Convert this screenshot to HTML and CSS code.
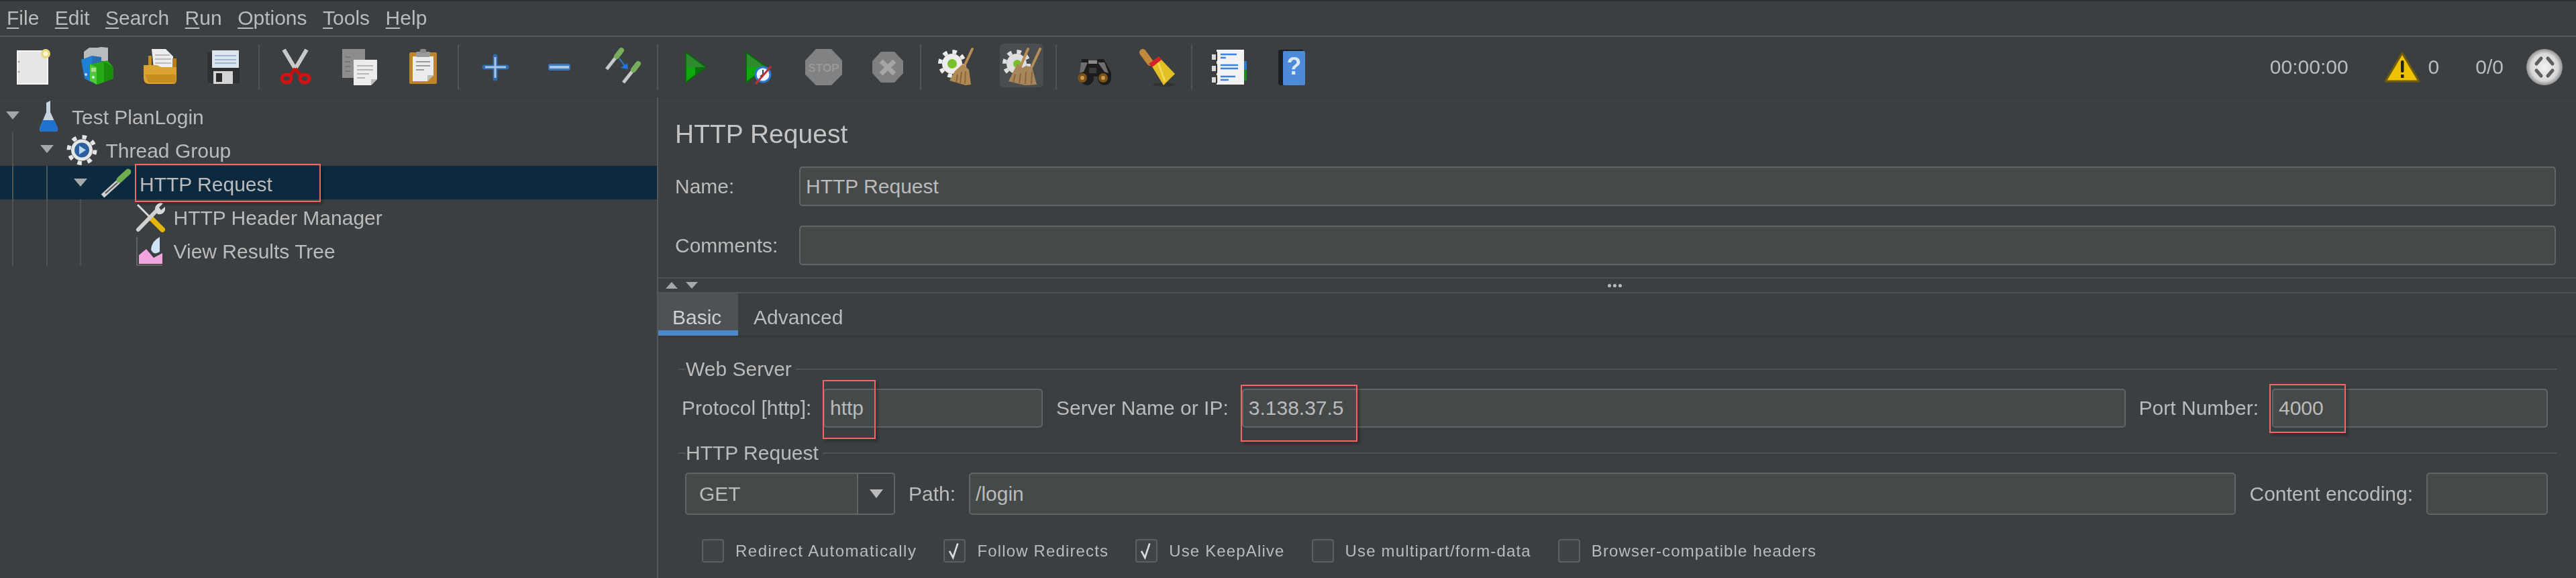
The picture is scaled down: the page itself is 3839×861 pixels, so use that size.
FILE: index.html
```html
<!DOCTYPE html>
<html lang="en">
<head>
<meta charset="utf-8">
<title>Apache JMeter</title>
<link rel="stylesheet" href="styles.css">
</head>
<body>
<div class="app">
  <nav class="menubar">
    <span><u>F</u>ile</span><span><u>E</u>dit</span><span><u>S</u>earch</span><span><u>R</u>un</span><span><u>O</u>ptions</span><span><u>T</u>ools</span><span><u>H</u>elp</span>
  </nav>
  <div class="toolbar">
    <div class="tb"><svg class="ic" viewBox="0 0 70 70"><rect x="13" y="11" width="45" height="49" fill="#e6e6e6" stroke="#f6f6f6" stroke-width="2"/><circle cx="15" cy="27" r="1.6" fill="#aaa"/><circle cx="15" cy="42" r="1.6" fill="#aaa"/><circle cx="55" cy="15" r="7" fill="#e8d680"/><circle cx="55" cy="15" r="3.5" fill="#fff8d8"/></svg></div>
    <div class="tb"><svg class="ic" viewBox="0 0 70 70"><path d="M17 12l8-6h12l6-1 10 1v20H17z" fill="#b9bcbe"/><path d="M13 24l16-6v40l-11-6z" fill="#1e7fd6"/><path d="M29 18l14 2v34l-14 4z" fill="#2a6bb0"/><path d="M26 31l26-6 9 10v17l-24 9-11-6z" fill="#27a915"/><path d="M26 31l10 4v26l-10-6z" fill="#52c83c"/><path d="M47 27l14 8v17l-14 5z" fill="#1b8d0c"/><circle cx="31" cy="50" r="2" fill="#dfe"/><rect x="28" y="36" width="7" height="6" fill="#a8e090"/><circle cx="20" cy="46" r="2" fill="#cde"/></svg></div>
    <div class="tb"><svg class="ic" viewBox="0 0 70 70"><path d="M18 18h5v15H18z" fill="#c08a1e"/><path d="M23 8h21l11 11v18H26z" fill="#ededed"/><path d="M28 17h22M28 23h24M28 29h24" stroke="#bbb" stroke-width="2"/><path d="M54 22h6v16h-6z" fill="#b67f18"/><path d="M11 32h20l6 3h23v20q0 5-5 5H19q-7 0-8-8z" fill="#dba22f"/><path d="M13 46h46v12H18z" fill="#c78d1f"/></svg></div>
    <div class="tb"><svg class="ic" viewBox="0 0 70 70"><path d="M11 13h48v46H14l-3-3z" fill="#2f3133"/><rect x="18" y="10" width="40" height="26" fill="#dde6ee"/><path d="M22 18h32M22 24h32M22 29h32" stroke="#9fb6cc" stroke-width="2"/><rect x="20" y="41" width="29" height="19" fill="#d4d4d4"/><rect x="24" y="44" width="9" height="13" fill="#2b2b2b"/></svg></div>
    <i class="sep"></i>
    <div class="tb"><svg class="ic" viewBox="0 0 70 70"><path d="M18 9l18 30M52 9L34 39" stroke="#c9c9c9" stroke-width="6" fill="none"/><path d="M35 37L28 46M35 37l7 9" stroke="#c01010" stroke-width="5"/><ellipse cx="22" cy="52" rx="7" ry="6" fill="none" stroke="#d01414" stroke-width="5"/><ellipse cx="49" cy="52" rx="7" ry="6" fill="none" stroke="#d01414" stroke-width="5"/></svg></div>
    <div class="tb"><svg class="ic" viewBox="0 0 70 70"><rect x="10" y="8" width="34" height="43" fill="#8d8d8d"/><path d="M14 20h8M14 27h8M14 34h8M14 41h8" stroke="#777" stroke-width="2"/><path d="M27 24h35v29l-9 9H27z" fill="#ececec"/><path d="M53 62l9-9h-9z" fill="#bcbcbc"/><path d="M32 33h24M32 39h24M32 45h18M32 51h12" stroke="#b5b5b5" stroke-width="2"/></svg></div>
    <div class="tb"><svg class="ic" viewBox="0 0 70 70"><rect x="15" y="13" width="41" height="47" rx="2" fill="#bf8426"/><path d="M20 19h31v28l-9 9H20z" fill="#ececec"/><path d="M42 56l9-9h-9z" fill="#bbb"/><path d="M25 27h21M25 33h21M25 39h12" stroke="#9b9b9b" stroke-width="2"/><rect x="25" y="12" width="21" height="8" rx="2" fill="#9a9a9a"/><rect x="31" y="8" width="9" height="6" rx="2" fill="#8a8a8a"/></svg></div>
    <i class="sep"></i>
    <div class="tb"><svg class="ic" viewBox="0 0 70 70"><path d="M20 35h33M36 19v33" stroke="#2e6cb0" stroke-width="7" stroke-linecap="round"/><path d="M21 35h31M36 20v31" stroke="#a9c6e6" stroke-width="3"/></svg></div>
    <div class="tb"><svg class="ic" viewBox="0 0 70 70"><rect x="20" y="30" width="33" height="10" rx="3" fill="#3a77bb"/><rect x="22" y="33" width="29" height="4" fill="#a9c6e6"/></svg></div>
    <div class="tb"><svg class="ic" viewBox="0 0 70 70"><path d="M12 38l15-19" stroke="#c9c9c9" stroke-width="5"/><path d="M27 19l7-9" stroke="#77ad5c" stroke-width="8" stroke-linecap="round"/><path d="M37 58l15-19" stroke="#c9c9c9" stroke-width="5"/><path d="M52 39l7-9" stroke="#77ad5c" stroke-width="8" stroke-linecap="round"/><path d="M31 22l8 11" stroke="#2a78d8" stroke-width="2"/><path d="M44 38l-11-2 10-7z" fill="#1c77e6"/></svg></div>
    <i class="sep"></i>
    <div class="tb shift"><svg class="ic" viewBox="0 0 70 70"><path d="M20 13l30 22-30 23z" fill="#0fa80f" stroke="#0a6a0a" stroke-width="2" stroke-linejoin="round"/><path d="M21 15l27 20H21z" fill="#2e8b2e"/><path d="M34 35l15 0-15 12z" fill="#0d6f0d"/></svg></div>
    <div class="tb shift"><svg class="ic" viewBox="0 0 70 70"><path d="M15 13l30 22-30 23z" fill="#0fa80f" stroke="#0a6a0a" stroke-width="2" stroke-linejoin="round"/><path d="M16 15l27 20H16z" fill="#2e8b2e"/><circle cx="40" cy="46" r="11" fill="#eef4fb" stroke="#2a78d0" stroke-width="3"/><path d="M40 39v7l-4 3" stroke="#345" stroke-width="2" fill="none"/><path d="M29 60l23-26" stroke="#c0302e" stroke-width="3"/></svg></div>
    <div class="tb shift"><svg class="ic" viewBox="0 0 70 70"><path d="M24 8h23l16 17v21L47 62H24L8 46V25z" fill="#828282"/><text class="stop-txt" x="35.5" y="42" text-anchor="middle">STOP</text></svg></div>
    <div class="tb shift"><svg class="ic" viewBox="0 0 70 70"><path d="M26 12h20l13 14v18L46 58H26L13 44V26z" fill="#808080"/><path d="M26 26l20 19M46 26L26 45" stroke="#a6a6a6" stroke-width="7"/></svg></div>
    <i class="sep"></i>
    <div class="tb"><svg class="ic" viewBox="0 0 70 70"><circle cx="28" cy="30" r="15" fill="#ececec"/><circle cx="28" cy="30" r="18" fill="none" stroke="#ececec" stroke-width="6" stroke-dasharray="6.5 7.6"/><circle cx="28" cy="30" r="7" fill="#7ac02a"/><path d="M58 8L44 38" stroke="#b58d55" stroke-width="4" stroke-linecap="round"/><path d="M44 30l9 9 3 22-8 1-24-7 8-14z" fill="#b08a55"/><path d="M36 46l-2 12M42 42l-2 17M48 41l-1 19" stroke="#8a6636" stroke-width="2"/></svg></div>
    <div class="tb hover"><svg class="ic" viewBox="0 0 70 70"><circle cx="27" cy="30" r="15" fill="#dedede"/><circle cx="27" cy="30" r="18" fill="none" stroke="#dedede" stroke-width="6" stroke-dasharray="6.5 7.6"/><circle cx="28" cy="30" r="6" fill="#7ac02a"/><path d="M44 8L32 36M62 8L49 36" stroke="#b58d55" stroke-width="4" stroke-linecap="round"/><path d="M28 30l8 6 5-3 9 2 7 26-18 1-24-6z" fill="#a9855a"/><path d="M25 46l-3 12M33 44l-2 15M41 42l-1 18M50 42l-1 18" stroke="#86653c" stroke-width="2"/></svg></div>
    <i class="sep"></i>
    <div class="tb"><svg class="ic" viewBox="0 0 70 70"><path d="M19 23h9l3 4h9l3-4h9l11 20v9a10 10 0 0 1-20 0v-3h-6v3a10 10 0 0 1-20 0v-9z" fill="#1c1c1c"/><path d="M18 28h10l-6 14-6 2zM43 28h10l6 16-6-2z" fill="#6e6e6e"/><rect x="29" y="25" width="13" height="5" fill="#8a8a8a"/><rect x="30" y="36" width="11" height="8" fill="#3a3a3a"/><circle cx="20" cy="51" r="7" fill="#7c5218"/><circle cx="51" cy="51" r="7" fill="#7c5218"/><circle cx="20" cy="51" r="3" fill="#c89a50"/><circle cx="51" cy="51" r="3" fill="#c89a50"/></svg></div>
    <div class="tb"><svg class="ic" viewBox="0 0 70 70"><ellipse cx="47" cy="61" rx="17" ry="3" fill="#333"/><path d="M15 13l11 15" stroke="#c08a3a" stroke-width="10" stroke-linecap="round"/><path d="M27 31l13-10 23 24-17 17z" fill="#e3c025"/><path d="M38 28l10 28" stroke="#f2da55" stroke-width="3"/><path d="M24 30l15-11 4 5-14 11z" fill="#d4202a"/></svg></div>
    <i class="sep"></i>
    <div class="tb"><svg class="ic" viewBox="0 0 70 70"><rect x="18" y="9" width="41" height="52" fill="#f2f2f2"/><rect x="59" y="26" width="4" height="13" fill="#2d78d0"/><rect x="59" y="39" width="4" height="16" fill="#1c8a1c"/><path d="M11 16h9v8h-9zM11 33h9v8h-9zM11 50h9v8h-9z" fill="#d8d8d8"/><path d="M18 12v14M18 30v14M18 47v12" stroke="#333" stroke-width="2"/><path d="M24 16h24M24 21h8M24 32h26M24 37h26M24 49h22M24 54h12" stroke="#3b83dd" stroke-width="2.5"/></svg></div>
    <div class="tb"><svg class="ic" viewBox="0 0 70 70"><path d="M15 12q0-3 3-3h34v4H22v49h-3q-4 0-4-4z" fill="#1d1f21"/><rect x="22" y="11" width="33" height="51" rx="2" fill="#4d8ad8"/><text class="help-q" x="38.5" y="46" text-anchor="middle">?</text></svg></div>
    <div class="status">
      <span>00:00:00</span>
      <svg class="warn" viewBox="0 0 54 48"><path d="M27 3L52 45H2z" fill="#f0c300" stroke="#6f5c08" stroke-width="3" stroke-linejoin="round"/><rect x="25" y="14" width="4.5" height="18" rx="2" fill="#222"/><rect x="25" y="35" width="4.5" height="5" fill="#222"/></svg>
      <span class="warn-n">0</span>
      <span class="ratio">0/0</span>
      <svg class="globe" viewBox="0 0 54 54"><defs><radialGradient id="gl"><stop offset="0" stop-color="#f2f2f2"/><stop offset=".75" stop-color="#d8d8d8"/><stop offset="1" stop-color="#8f8f8f"/></radialGradient></defs><ellipse cx="27" cy="27" rx="27" ry="27" fill="url(#gl)"/><path d="M15 22l7-8M32 14l7 8M15 32l7 8M39 32l-7 8" stroke="#5f5f5f" stroke-width="5" stroke-linecap="round"/></svg>
    </div>
  </div>
  <div class="main">
    <aside class="tree">
      <div class="row"><i class="tri"></i>
        <svg class="ti" viewBox="0 0 46 50"><path d="M21 6l6-3v17l11 24q1 5-4 5H15q-5 0-4-5l10-24z" fill="#c8d4df"/><path d="M16 32h17l5 12q1 5-4 5H15q-5 0-4-5z" fill="#1f72cf"/></svg>
        <span class="lb">Test PlanLogin</span></div>
      <div class="row"><i class="ind"></i><i class="tri"></i>
        <svg class="ti" viewBox="0 0 46 50"><circle cx="23" cy="26.500" r="16" fill="#e6e6e6"/><circle cx="23" cy="26.500" r="19.500" fill="none" stroke="#e6e6e6" stroke-width="6" stroke-dasharray="6.500 8.800"/><circle cx="23" cy="26.500" r="11" fill="#2c5f9e"/><path d="M19 20l10 6.500-10 6.500z" fill="#bcd6f0"/></svg>
        <span class="lb">Thread Group</span></div>
      <div class="row sel"><i class="ind"></i><i class="ind"></i><i class="tri"></i>
        <svg class="ti" viewBox="0 0 46 50"><path d="M4 45L28 23" stroke="#cfcfcf" stroke-width="7"/><path d="M8 41L26 25" stroke="#555" stroke-width="2"/><path d="M29 21l13-12" stroke="#6fae4f" stroke-width="9" stroke-linecap="round"/></svg>
        <span class="lb">HTTP Request</span><b class="mark mark-tree"></b></div>
      <div class="row"><i class="ind"></i><i class="ind"></i><i class="ind"></i><i class="tri none"></i>
        <svg class="ti" viewBox="0 0 46 50"><path d="M5 8l20 20" stroke="#d8d8d8" stroke-width="3"/><path d="M27 30l15 15" stroke="#e5b50f" stroke-width="8" stroke-linecap="round"/><path d="M6 45L35 15" stroke="#d0d0d0" stroke-width="6" stroke-linecap="round"/><path d="M31 15a9 9 0 0 1 12-9l-6 6 3 4 6-5a9 9 0 0 1-11 11z" fill="#d8d8d8"/></svg>
        <span class="lb">HTTP Header Manager</span></div>
      <div class="row"><i class="ind"></i><i class="ind"></i><i class="ind"></i><i class="tri none"></i>
        <svg class="ti" viewBox="0 0 46 50"><path d="M4 6v42h38" stroke="#6e6e6e" stroke-width="1.500" fill="none"/><path d="M7 46V33l11-9 11 13 13-7v16z" fill="#f2a4de"/><path d="M38 6Q26 12 25 25q4 9 13 3z" fill="#cfe3f7"/></svg>
        <span class="lb">View Results Tree</span></div>
    </aside>
    <section class="detail">
      <div class="head">
        <h1 class="title">HTTP Request</h1>
        <div class="namegrid">
          <label>Name:</label><div class="field">HTTP Request</div>
          <label>Comments:</label><div class="field"></div>
        </div>
      </div>
      <div class="splitter">
        <div class="arrows"><i class="up"></i><i class="down"></i></div>
        <div class="dots"><i></i><i></i><i></i></div>
        <div></div>
      </div>
      <div class="tabs"><div class="tab on">Basic</div><div class="tab">Advanced</div></div>
      <div class="panel">
        <div class="legend"><i class="stub"></i><span>Web Server</span><i class="rule"></i></div>
        <div class="frow">
          <label class="l-proto">Protocol [http]:</label>
          <div class="field w-proto">http<b class="mark mark-http"></b></div>
          <label class="l-next">Server Name or IP:</label>
          <div class="field grow">3.138.37.5<b class="mark mark-ip"></b></div>
          <label class="l-next">Port Number:</label>
          <div class="field w-port">4000<b class="mark mark-port"></b></div>
        </div>
        <div class="legend second"><i class="stub"></i><span>HTTP Request</span><i class="rule"></i></div>
        <div class="frow tall">
          <div class="combo"><span class="cval">GET</span><span class="cbtn"><i></i></span></div>
          <label class="l-next">Path:</label>
          <div class="field grow">/login</div>
          <label class="l-next">Content encoding:</label>
          <div class="field w-enc"></div>
        </div>
        <div class="checks">
          <div class="chk first"><i class="box"></i><span>Redirect Automatically</span></div>
          <div class="chk"><i class="box"><svg viewBox="0 0 33 35"><path d="M8 18l6 11 8-24" stroke="#dcdcdc" stroke-width="3" fill="none"/></svg></i><span>Follow Redirects</span></div>
          <div class="chk"><i class="box"><svg viewBox="0 0 33 35"><path d="M8 18l6 11 8-24" stroke="#dcdcdc" stroke-width="3" fill="none"/></svg></i><span>Use KeepAlive</span></div>
          <div class="chk"><i class="box"></i><span>Use multipart/form-data</span></div>
          <div class="chk"><i class="box"></i><span>Browser-compatible headers</span></div>
        </div>
      </div>
    </section>
  </div>
</div>
</body>
</html>
```
FILE: styles.css
```css
* { box-sizing: border-box; }
html, body { margin: 0; height: 100%; background: #3c3f41; overflow: hidden; }
.app {
  height: 861px; display: flex; flex-direction: column;
  font: 30px/38px "Liberation Sans", Arial, sans-serif; color: #bbbbbb;
  border-top: 2px solid #2f3234; filter: blur(.6px);
}
label { white-space: nowrap; }
i, b { display: block; }

.menubar { height: 51px; display: flex; gap: 23.5px; padding: 6px 0 0 10px; flex: none; }
.menubar u { text-underline-offset: 4px; text-decoration-thickness: 2px; }

.toolbar {
  height: 92px; flex: none; display: flex; align-items: center;
  border-top: 2px solid #555759; border-bottom: 1px solid #37393b;
}
.tb { width: 95px; height: 70px; display: flex; align-items: center; justify-content: center; flex: none; }
.tb.shift { position: relative; left: 3px; }
.tb.hover { position: relative; left: 2px; }
.tb.hover::before { content: ""; position: absolute; left: 15px; top: 0; width: 65px; height: 65px; border-radius: 6px; background: #4a4d4f; }
.tb .ic { width: 70px; height: 70px; flex: none; position: relative; }
.sep { width: 2px; height: 68px; background: #505355; margin: 0 5px; flex: none; }
.stop-txt { font: 700 17px "Liberation Sans", Arial, sans-serif; fill: #999; }
.help-q { font: 700 36px "Liberation Sans", Arial, sans-serif; fill: #dbe8f7; }
.status { margin-left: auto; padding-right: 20px; display: flex; align-items: center; }
.warn { width: 54px; height: 48px; margin-left: 53px; }
.warn-n { margin-left: 12px; }
.ratio { margin-left: 54px; }
.globe { width: 54px; height: 54px; margin-left: 34px; }

.main { flex: 1; display: flex; min-height: 0; }
.tree { width: 981px; flex: none; padding-top: 2px; border-right: 2px solid #555759; position: relative; }
.row { height: 50px; display: flex; align-items: center; padding-left: 18px; position: relative; }
.row.sel { background: #0d293e; }
.ind { width: 50.5px; height: 50px; border-left: 2px solid #505355; flex: none; }
.tri {
  width: 0; height: 0; flex: none; margin-left: -9px; margin-right: 0;
  border-left: 10.5px solid transparent; border-right: 10.5px solid transparent; border-top: 12px solid #a5a8aa;
}
.tri.none { border-top-color: transparent; }
.ti { width: 46px; height: 50px; margin-left: 19px; flex: none; }
.lb { margin-left: 13px; padding-top: 6px; white-space: nowrap; }

.mark { position: absolute; border: 2px solid #f96565; box-shadow: 4px 4px 3px rgba(0,0,0,.22); pointer-events: none; }
.mark-tree { left: 201px; top: -3px; width: 277px; height: 57px; }
.mark-http { left: -3px; top: -15px; width: 79px; height: 88px; }
.mark-ip { left: -4px; top: -8px; width: 174px; height: 85px; }
.mark-port { left: -6px; top: -9px; width: 114px; height: 73px; }

.detail { flex: 1; min-width: 0; display: flex; flex-direction: column; }
.head { padding: 0 30px 0 25px; }
.title { margin: 0; padding-top: 31px; height: 103px; font-size: 39px; line-height: 48px; font-weight: 400; color: #c4c4c4; }
.namegrid { display: grid; grid-template-columns: 185px 1fr; row-gap: 29px; align-items: center; }

.field {
  height: 59px; background: #45494a; border: 2px solid #646464; border-radius: 5px;
  padding-left: 8px; line-height: 55px; position: relative; white-space: nowrap;
}
.splitter {
  margin-top: 18px; height: 24px; flex: none; border-top: 2px solid #505355; border-bottom: 2px solid #505355;
  display: grid; grid-template-columns: 1fr auto 1fr; align-items: center;
}
.arrows { display: flex; gap: 12px; padding-left: 11px; }
.up { width: 0; height: 0; border: 9px solid transparent; border-top: 0; border-bottom: 10px solid #a5a8aa; }
.down { width: 0; height: 0; border: 9px solid transparent; border-bottom: 0; border-top: 10px solid #a5a8aa; }
.dots { display: flex; gap: 3px; margin-right: 8px; }
.dots i { width: 5px; height: 5px; border-radius: 50%; background: #bbb; }

.tabs { height: 66px; flex: none; display: flex; border-bottom: 3px solid #36383a; }
.tab { height: 63px; padding: 0 23px 5px; line-height: 71px; }
.tab.on { width: 119px; padding: 0 0 5px 21px; background: #4e5254; box-shadow: inset 0 -8px 0 #4a88c7; color: #cfcfcf; }

.panel { padding: 28px 29px 0 30px; }
.legend { display: flex; align-items: center; height: 38px; }
.legend.second { margin-top: 19px; }
.stub { width: 11px; height: 2px; background: #505355; flex: none; }
.rule { flex: 1; height: 2px; background: #505355; margin-left: 6px; }
.legend span { white-space: nowrap; }

.frow { margin-top: 10px; display: flex; align-items: center; padding: 0 13px 0 5px; }
.frow .field { height: 58px; line-height: 54px; }
.frow.tall { padding-left: 10px; }
.frow.tall .field { height: 63px; line-height: 59px; }
.l-proto { width: 190px; margin-right: 21px; }
.l-next { margin: 0 20px; }
.w-proto { width: 327px; flex: none; }
.w-port { width: 411px; flex: none; }
.w-enc { width: 181px; flex: none; }
.grow { flex: 1; min-width: 0; }

.combo {
  width: 313px; height: 63px; flex: none; display: flex; background: #45494a;
  border: 2px solid #646464; border-radius: 5px; line-height: 59px;
}
.cval { width: 254px; padding-left: 19px; }
.cbtn { flex: 1; background: #3c3f41; border-left: 2px solid #646464; border-radius: 0 4px 4px 0; display: flex; align-items: center; justify-content: center; }
.cbtn i { width: 0; height: 0; border-left: 10.5px solid transparent; border-right: 10.5px solid transparent; border-top: 13px solid #bbb; }

.checks { margin-top: 36px; padding-left: 35px; display: flex; gap: 40px; }
.chk { display: flex; align-items: center; gap: 17px; height: 35px; font-size: 24px; letter-spacing: 1.15px; white-space: nowrap; }
.chk.first { letter-spacing: 1.5px; }
.box { width: 33px; height: 35px; background: #414446; border: 2px solid #5e6060; border-radius: 4px; flex: none; }
.box svg { display: block; width: 29px; height: 31px; }
```
